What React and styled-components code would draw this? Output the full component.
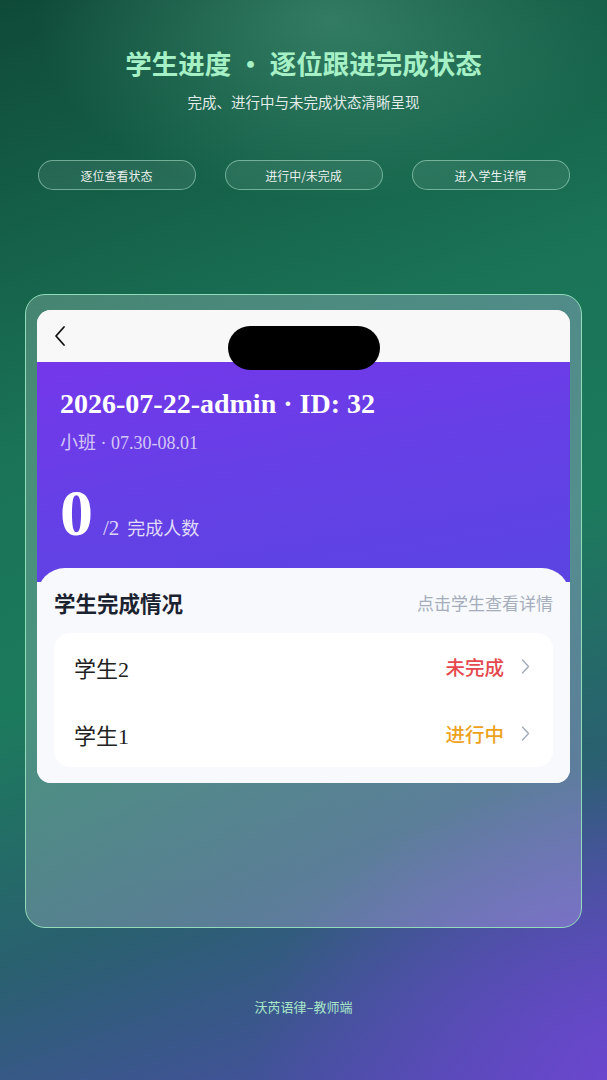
import React from "react";
import styled, { createGlobalStyle } from "styled-components";

const GlobalStyle = createGlobalStyle`
  html, body {
    margin: 0;
    padding: 0;
  }
  body {
    font-family: "Noto Sans CJK SC", "Noto Sans", sans-serif;
  }
  * {
    box-sizing: border-box;
  }
`;

const Page = styled.div`
  width: 607px;
  height: 1080px;
  overflow: hidden;
  display: flex;
  flex-direction: column;
  align-items: center;
  background:
    radial-gradient(ellipse 420px 260px at 330px 20px, rgba(90, 170, 140, 0.45), transparent 70%),
    radial-gradient(ellipse 520px 420px at 640px 1080px, rgba(110, 70, 210, 0.95), transparent 75%),
    linear-gradient(160deg, #0f4a38 0%, #1a7356 35%, #1c7a5c 55%, #2a6070 75%, #4f4ab0 100%);
`;

const Title = styled.h1`
  margin: 44px 0 0;
  font-size: 26.5px;
  line-height: 38px;
  font-weight: 700;
  color: #a6f0c6;
`;

const Subtitle = styled.p`
  margin: 9px 0 0;
  font-size: 14.5px;
  line-height: 22px;
  color: rgba(255, 255, 255, 0.88);
`;

const Chips = styled.div`
  margin-top: 47px;
  display: grid;
  grid-template-columns: repeat(3, 158px);
  column-gap: 29px;
`;

const Chip = styled.div`
  height: 30px;
  border-radius: 15px;
  border: 1px solid rgba(190, 240, 215, 0.5);
  background: rgba(255, 255, 255, 0.08);
  color: rgba(255, 255, 255, 0.92);
  font-size: 12px;
  display: flex;
  align-items: center;
  justify-content: center;
`;

const Frame = styled.div`
  margin-top: 104px;
  width: 557px;
  height: 634px;
  padding: 15px 11px;
  border-radius: 20px;
  border: 1.5px solid #92dcba;
  background: linear-gradient(100deg, rgba(255, 255, 255, 0.2) 0%, rgba(190, 180, 240, 0.35) 100%);
`;

const Screen = styled.div`
  position: relative;
  border-radius: 14px;
  overflow: hidden;
  background: #f7f9fc;
`;

const NavBar = styled.div`
  height: 52px;
  background: #f8f8f8;
  display: flex;
  align-items: center;
  padding-left: 16px;
`;

const Island = styled.div`
  position: absolute;
  left: 191px;
  top: 16px;
  width: 152px;
  height: 44px;
  border-radius: 22px;
  background: #000;
  z-index: 2;
`;

const Hero = styled.div`
  background: linear-gradient(170deg, #7437ea 0%, #6540e6 50%, #5a44e2 100%);
  padding: 24px 23px 31px;
  color: #fff;
  font-family: "Liberation Serif", "Noto Sans CJK SC", serif;
`;

const HeroTitle = styled.div`
  font-size: 28px;
  font-weight: 700;
  line-height: 36px;
`;

const HeroSub = styled.div`
  margin-top: 8px;
  font-size: 18px;
  line-height: 26px;
  color: rgba(255, 255, 255, 0.72);
`;

const Count = styled.div`
  margin-top: 19px;
  display: flex;
  align-items: baseline;
`;

const BigNum = styled.span`
  font-size: 66px;
  font-weight: 700;
  line-height: 76px;
`;

const CountOf = styled.span`
  margin-left: 10px;
  font-size: 21px;
  color: rgba(255, 255, 255, 0.8);
`;

const CountLabel = styled.span`
  margin-left: 8px;
  font-size: 18px;
  color: rgba(255, 255, 255, 0.82);
  font-family: "Noto Sans CJK SC", sans-serif;
`;

const Sheet = styled.div`
  margin-top: -14px;
  position: relative;
  border-radius: 28px 28px 0 0;
  background: #f7f9fc;
  padding: 18px 17px 16px;
`;

const SheetHead = styled.div`
  height: 32px;
  display: flex;
  justify-content: space-between;
  align-items: center;
  margin-bottom: 15px;
`;

const SheetTitle = styled.div`
  font-size: 21.5px;
  font-weight: 700;
  color: #1b2230;
`;

const SheetHint = styled.div`
  font-size: 17px;
  color: #a5adbb;
`;

const List = styled.div`
  background: #fff;
  border-radius: 16px;
  padding: 0 22px 0 20px;
`;

const Row = styled.div`
  height: 67px;
  display: flex;
  align-items: center;
  justify-content: space-between;
`;

const Name = styled.div`
  font-size: 22px;
  color: #222;
  font-family: "Liberation Serif", "Noto Sans CJK SC", serif;
`;

const Status = styled.div`
  display: flex;
  align-items: center;
  gap: 16px;
  font-size: 19.5px;
  font-weight: 500;
  color: ${(p) => p.$color};
`;

const Footer = styled.div`
  margin-top: 69px;
  font-size: 13px;
  color: #a9e8c9;
`;

const Chevron = () => (
  <svg width="11" height="17" viewBox="0 0 11 17" fill="none">
    <path d="M2.5 2l6 6.5-6 6.5" stroke="#a3acba" strokeWidth="1.4" strokeLinecap="round" strokeLinejoin="round" />
  </svg>
);

const BackArrow = () => (
  <svg width="14" height="22" viewBox="0 0 14 22" fill="none">
    <path d="M11 2L3 11l8 9" stroke="#111" strokeWidth="1.8" strokeLinecap="round" strokeLinejoin="round" />
  </svg>
);

const students = [
  { name: "学生2", status: "未完成", color: "#e5484d" },
  { name: "学生1", status: "进行中", color: "#eea21c" },
];

export default function App() {
  return (
    <>
      <GlobalStyle />
      <Page>
        <Title>学生进度 · 逐位跟进完成状态</Title>
        <Subtitle>完成、进行中与未完成状态清晰呈现</Subtitle>
        <Chips>
          <Chip>逐位查看状态</Chip>
          <Chip>进行中/未完成</Chip>
          <Chip>进入学生详情</Chip>
        </Chips>
        <Frame>
          <Screen>
            <Island />
            <NavBar>
              <BackArrow />
            </NavBar>
            <Hero>
              <HeroTitle>2026-07-22-admin · ID: 32</HeroTitle>
              <HeroSub>小班 · 07.30-08.01</HeroSub>
              <Count>
                <BigNum>0</BigNum>
                <CountOf>/2</CountOf>
                <CountLabel>完成人数</CountLabel>
              </Count>
            </Hero>
            <Sheet>
              <SheetHead>
                <SheetTitle>学生完成情况</SheetTitle>
                <SheetHint>点击学生查看详情</SheetHint>
              </SheetHead>
              <List>
                {students.map((s) => (
                  <Row key={s.name}>
                    <Name>{s.name}</Name>
                    <Status $color={s.color}>
                      {s.status}
                      <Chevron />
                    </Status>
                  </Row>
                ))}
              </List>
            </Sheet>
          </Screen>
        </Frame>
        <Footer>沃芮语律–教师端</Footer>
      </Page>
    </>
  );
}
